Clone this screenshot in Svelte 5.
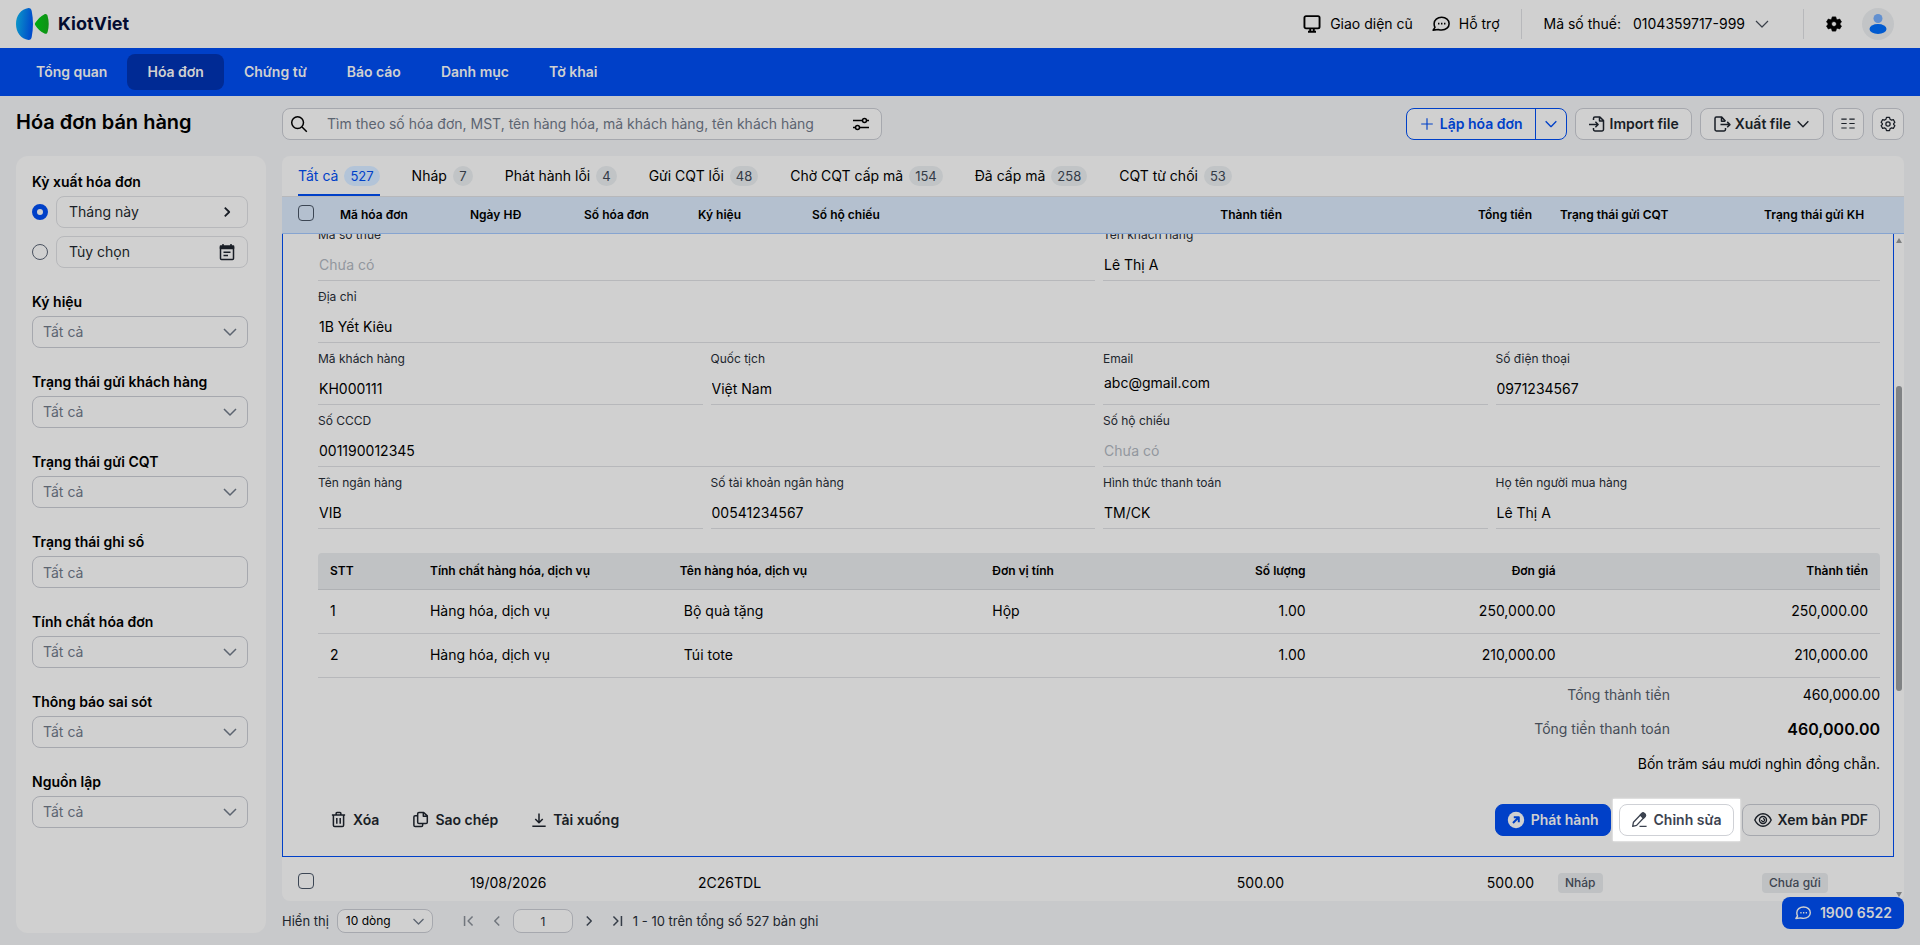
<script lang="ts">
    const icons: Record<string, string> = {
        monitor: '<rect x="2.2" y="1.9" width="13.6" height="11" rx="1.4"/><path d="M7.4 13.2v2.6M10.6 13.2v2.6M5.4 16h7.2" />',
        chat: '<path d="M9.6 3c3.900 0 6.700 2.500 6.700 5.700s-2.800 5.700-6.700 5.700c-1.100 0-2.100-.2-3-.5l-4.700.6 1.700-2.500c-.5-.9-.8-2-.8-3.300C2.800 5.500 5.700 3 9.600 3z"/><path d="M6.300 8.700h1.300M9 8.700h1.300M11.700 8.700H13" stroke-width="1.600"/>',
        search: '<circle cx="7.6" cy="7.6" r="5.9"/><path d="M12 12l4.8 4.8"/>',
        sliders: '<path d="M1 5.4h9.4M14.6 5.4H17M1 12.4h2.4M7.6 12.4H17"/><circle cx="12.5" cy="5.4" r="2"/><circle cx="5.5" cy="12.4" r="2"/>',
        plus: '<path d="M9 2.500v13M2.500 9h13"/>',
        down: '<path d="M3 6l6 6 6-6"/>',
        right: '<path d="M6.5 4l5 5-5 5"/>',
        left: '<path d="M11.5 4l-5 5 5 5"/>',
        first: '<path d="M4 3.5v11M13 4L8 9l5 5"/>',
        last: '<path d="M14 3.5v11M5 4l5 5-5 5"/>',
        importFile: '<path d="M5.5 5V3.4c0-.8.6-1.4 1.4-1.4h5l3.6 3.6v9c0 .8-.6 1.4-1.4 1.4H6.9c-.8 0-1.4-.6-1.4-1.4V13M11.5 2.2v3.9h3.8M1 9.500h9M7.4 6.800L10.1 9.500l-2.7 2.7"/>',
        exportFile: '<path d="M12.5 6.2L8.7 2H3.4C2.6 2 2 2.6 2 3.4v11.2c0 .8.6 1.4 1.4 1.4h7.7c.8 0 1.4-.6 1.4-1.4V13M8.5 2.2v4h3.8M7.5 9.6h9.3M14.2 6.9l2.7 2.7-2.7 2.7"/>',
        list: '<path d="M1.500 3.500h6M1.500 8.500h6M1.500 13.500h6M10.500 3.500h6M10.500 8.500h6M10.500 13.500h6"/>',
        gear: '<path d="M7.3 1.6h3.4l.6 2 1.7 1 2-.5 1.7 2.9-1.4 1.5v1l1.4 1.5-1.7 2.9-2-.5-1.7 1-.6 2H7.3l-.6-2-1.7-1-2 .5L1.3 11l1.4-1.5v-1L1.3 7 3 4.1l2 .5 1.7-1z"/><circle cx="9" cy="9" r="2.4"/>',
        gearSolid: '<path fill="currentColor" fill-rule="evenodd" stroke-width=".8" d="M7 1h4l.5 2.3 1.6.9 2.3-.8 2 3.4L15.700 8.400v1.300l1.700 1.500-2 3.400-2.300-.8-1.600.9L11 17H7l-.5-2.300-1.600-.9-2.300.8-2-3.400L2.300 9.700V8.400L.6 6.800l2-3.400 2.300.8 1.600-.9zM9 6.200a2.800 2.800 0 100 5.600 2.800 2.800 0 000-5.600z"/>',
        calendar: '<path d="M2.500 4h13v11.500c0 .6-.4 1-1 1h-11c-.6 0-1-.4-1-1z"/><path fill="currentColor" d="M2.500 3h13v2.600h-13z"/><path d="M5 1v2M13 1v2M5.500 9.300h7M5.500 12.500h4.500"/>',
        trash: '<path d="M2 4.200h14M6.500 4V2.500c0-.5.4-.9.9-.9h3.200c.5 0 .9.400.9.900V4M3.600 4.500v10.600c0 .8.6 1.400 1.400 1.400h8c.8 0 1.400-.6 1.400-1.400V4.500M7.200 7.500v6M10.800 7.500v6"/>',
        copy: '<path d="M7.400 1.500h5l3.800 3.700v6.600c0 .8-.6 1.400-1.400 1.400H7.400c-.8 0-1.400-.6-1.400-1.400V2.900c0-.8.600-1.400 1.400-1.400zM12 1.800v3.800h4M6 5H3.400C2.600 5 2 5.600 2 6.400v8.700c0 .8.600 1.400 1.400 1.400h6.500c.8 0 1.400-.6 1.400-1.400v-1.700"/>',
        download: '<path d="M9 1.800v10M4.800 7.800L9 12l4.200-4.200M1.500 16h15"/>',
        edit: '<path d="M1.800 16.200l.8-4.300 8.800-9.200c.7-.8 1.900-.8 2.700-.1l.6.600c.8.700.8 1.900.1 2.700l-8.900 9.300zM9 16.300h7.500"/><path fill="currentColor" d="M9.800 4.400l1.800-1.900c.7-.7 1.700-.7 2.400 0l.9.900c.7.700.6 1.700 0 2.400L13.100 7.700z"/>',
        eye: '<path d="M9 2.800c3.600 0 6.500 2.600 8.200 6.200-1.700 3.600-4.600 6.200-8.200 6.200S2.500 12.600.8 9C2.500 5.400 5.400 2.800 9 2.800z"/><circle cx="9" cy="9" r="3.500"/><path d="M9 7.600A1.500 1.500 0 117.600 9" stroke-width="1.200"/>',
        send: '<circle cx="9" cy="9" r="8.200" fill="currentColor" stroke="none"/><path d="M6 12l5.200-5.200M6.800 6.200h5v5" stroke="#0040c8" stroke-width="2"/>'
    };

    const menu = ['Tổng quan', 'Hóa đơn', 'Chứng từ', 'Báo cáo', 'Danh mục', 'Tờ khai'];

    const filters = [
        { id: 'symbol', label: 'Ký hiệu', select: true },
        { id: 'customer-state', label: 'Trạng thái gửi khách hàng', select: true },
        { id: 'tax-state', label: 'Trạng thái gửi CQT', select: true },
        { id: 'ledger-state', label: 'Trạng thái ghi sổ', select: false },
        { id: 'kind', label: 'Tính chất hóa đơn', select: true },
        { id: 'errors', label: 'Thông báo sai sót', select: true },
        { id: 'source', label: 'Nguồn lập', select: true }
    ];

    const tabs = [
        { label: 'Tất cả', count: 527 },
        { label: 'Nháp', count: 7 },
        { label: 'Phát hành lỗi', count: 4 },
        { label: 'Gửi CQT lỗi', count: 48 },
        { label: 'Chờ CQT cấp mã', count: 154 },
        { label: 'Đã cấp mã', count: 258 },
        { label: 'CQT từ chối', count: 53 }
    ];

    const fields = [
        { id: 'tax-code', label: 'Mã số thuế', value: '', span: 2 },
        { id: 'name', label: 'Tên khách hàng', value: 'Lê Thị A', span: 2 },
        { id: 'address', label: 'Địa chỉ', value: '1B Yết Kiêu', span: 4 },
        { id: 'code', label: 'Mã khách hàng', value: 'KH000111', span: 1 },
        { id: 'country', label: 'Quốc tịch', value: 'Việt Nam', span: 1 },
        { id: 'email', label: 'Email', value: 'abc@gmail.com', span: 1 },
        { id: 'phone', label: 'Số điện thoại', value: '0971234567', span: 1 },
        { id: 'cccd', label: 'Số CCCD', value: '001190012345', span: 2 },
        { id: 'passport', label: 'Số hộ chiếu', value: '', span: 2 },
        { id: 'bank', label: 'Tên ngân hàng', value: 'VIB', span: 1 },
        { id: 'account', label: 'Số tài khoản ngân hàng', value: '00541234567', span: 1 },
        { id: 'payment', label: 'Hình thức thanh toán', value: 'TM/CK', span: 1 },
        { id: 'buyer', label: 'Họ tên người mua hàng', value: 'Lê Thị A', span: 1 }
    ];

    const items = [
        { name: 'Bộ quà tặng', unit: 'Hộp', qty: '1.00', price: '250,000.00', total: '250,000.00' },
        { name: 'Túi tote', unit: '', qty: '1.00', price: '210,000.00', total: '210,000.00' }
    ];

    let activeMenu = $state('Hóa đơn');
    let activeTab = $state('Tất cả');
    let period = $state('month');
    let page = $state('1');
</script>

{#snippet icon(name: string, size = 18, width = 1.5)}
    <svg class="icon" width={size} height={size} viewBox="0 0 18 18" fill="none" stroke="currentColor" stroke-width={width} stroke-linejoin="round" aria-hidden="true">
        {@html icons[name]}
    </svg>
{/snippet}

{#snippet invoiceCols()}
    <colgroup>
        <col class="c-check" />
        <col class="c-code" />
        <col class="c-short" />
        <col class="c-short" />
        <col class="c-short" />
        <col />
        <col class="c-money" />
        <col class="c-money" />
        <col class="c-tax" />
        <col class="c-customer" />
    </colgroup>
{/snippet}

<div class="app">
    <header class="topbar">
        <a class="logo" href="/">
            <svg width="33" height="32" viewBox="0 0 33 32" aria-hidden="true">
                <defs>
                    <linearGradient id="logo-blue" x1="0" x2="1" y1="0.300" y2="0.500">
                        <stop offset="0" stop-color="#0a96c8" />
                        <stop offset="1" stop-color="#0048cc" />
                    </linearGradient>
                    <linearGradient id="logo-green" x1="0" x2="1">
                        <stop offset="0" stop-color="#00ac10" />
                        <stop offset="1" stop-color="#109016" />
                    </linearGradient>
                </defs>
                <path fill="url(#logo-blue)" d="M12.500 0C5 1 0 7.500 0 16s5 15 12.500 16c2 0 2.800-1 3.200-3 1.700-8.500 1.700-17.500 0-26-.4-2-1.200-3-3.200-3z" />
                <path fill="url(#logo-green)" d="M28.500 6.200c1.500-.5 2.700.2 3.100 1.800 1.500 5.300 1.500 10.700 0 16-.4 1.600-1.600 2.300-3.100 1.600-4-2.200-7-5-9.200-8.400-.6-.9-.6-1.500 0-2.400 2.200-3.400 5.200-6.400 9.200-8.600z" />
            </svg>
            <span>KiotViet</span>
        </a>
        <div class="top-links">
            <button class="top-link">{@render icon('monitor', 20, 1.7)}Giao diện cũ</button>
            <button class="top-link">{@render icon('chat', 20, 1.4)}Hỗ trợ</button>
        </div>
        <button class="tax-code"><span>Mã số thuế:</span><span>0104359717-999</span>{@render icon('down', 18, 1.2)}</button>
        <button class="plain gear" aria-label="Thiết lập">{@render icon('gearSolid', 16, 1)}</button>
        <button class="avatar" aria-label="Tài khoản">
            <svg width="32" height="32" viewBox="0 0 32 32" aria-hidden="true">
                <circle cx="16" cy="10.500" r="4.500" fill="#6290d0" />
                <ellipse cx="16" cy="21" rx="8.500" ry="5" fill="#005ad0" />
            </svg>
        </button>
    </header>

    <nav class="menu">
        {#each menu as item}
            <a href="#{item}" class:active={item === activeMenu} onclick={() => (activeMenu = item)}>{item}</a>
        {/each}
    </nav>

    <div class="content">
        <aside class="side">
            <h1>Hóa đơn bán hàng</h1>
            <div class="filters">
                <div class="filter">
                    <span class="filter-title">Kỳ xuất hóa đơn</span>
                    <div class="period">
                        <input type="radio" name="period" value="month" aria-label="Tháng này" bind:group={period} />
                        <button class="box">Tháng này{@render icon('right', 16, 2)}</button>
                    </div>
                    <div class="period">
                        <input type="radio" name="period" value="custom" aria-label="Tùy chọn" bind:group={period} />
                        <button class="box calendar">Tùy chọn{@render icon('calendar', 18, 1.5)}</button>
                    </div>
                </div>
                {#each filters as filter}
                    <div class="filter">
                        <label class="filter-title" for={filter.id}>{filter.label}</label>
                        {#if filter.select}
                            <div class="select">
                                <select id={filter.id}><option>Tất cả</option></select>
                                {@render icon('down', 18, 1.5)}
                            </div>
                        {:else}
                            <input class="text-box" id={filter.id} type="text" placeholder="Tất cả" />
                        {/if}
                    </div>
                {/each}
            </div>
        </aside>

        <main class="main">
            <div class="toolbar">
                <div class="search">
                    {@render icon('search', 18, 1.5)}
                    <input type="text" aria-label="Tìm hóa đơn" placeholder="Tìm theo số hóa đơn, MST, tên hàng hóa, mã khách hàng, tên khách hàng" />
                    <button class="plain" aria-label="Bộ lọc">{@render icon('sliders', 18, 1.5)}</button>
                </div>
                <div class="split">
                    <button>{@render icon('plus', 16, 1.300)}Lập hóa đơn</button>
                    <button class="more" aria-label="Thêm">{@render icon('down', 16, 1.5)}</button>
                </div>
                <button class="btn">{@render icon('importFile', 18, 1.500)}Import file</button>
                <button class="btn">{@render icon('exportFile', 18, 1.500)}Xuất file{@render icon('down', 16, 1.600)}</button>
                <button class="btn square" aria-label="Cột hiển thị">{@render icon('list', 16, 1.200)}</button>
                <button class="btn square" aria-label="Tùy chỉnh">{@render icon('gear', 16, 1.400)}</button>
            </div>

            <section class="panel">
                <div class="tabs">
                    {#each tabs as tab}
                        <button class:active={tab.label === activeTab} onclick={() => (activeTab = tab.label)}>
                            {tab.label}<span class="count">{tab.count}</span>
                        </button>
                    {/each}
                </div>

                <div class="table-head">
                    <table class="invoices">
                        {@render invoiceCols()}
                        <thead>
                            <tr>
                                <th><input type="checkbox" aria-label="Chọn tất cả" /></th>
                                <th>Mã hóa đơn</th>
                                <th>Ngày HĐ</th>
                                <th>Số hóa đơn</th>
                                <th>Ký hiệu</th>
                                <th>Số hộ chiếu</th>
                                <th class="money">Thành tiền</th>
                                <th class="money">Tổng tiền</th>
                                <th class="status">Trạng thái gửi CQT</th>
                                <th class="status">Trạng thái gửi KH</th>
                            </tr>
                        </thead>
                    </table>
                </div>

                <div class="table-body">
                    <div class="rows">
                        <div class="detail">
                            <div class="fields">
                                {#each fields as field}
                                    <div class="field span-{field.span}">
                                        <label for={field.id}>{field.label}</label>
                                        <input id={field.id} class:compact={field.id === 'email'} type="text" value={field.value} placeholder="Chưa có" readonly />
                                    </div>
                                {/each}
                            </div>

                            <table class="items">
                                <colgroup>
                                    <col class="i-index" />
                                    <col class="i-kind" />
                                    <col class="i-name" />
                                    <col class="i-unit" />
                                    <col class="i-qty" />
                                    <col class="i-price" />
                                    <col />
                                </colgroup>
                                <thead>
                                    <tr>
                                        <th>STT</th>
                                        <th>Tính chất hàng hóa, dịch vụ</th>
                                        <th>Tên hàng hóa, dịch vụ</th>
                                        <th>Đơn vị tính</th>
                                        <th class="num">Số lượng</th>
                                        <th class="num">Đơn giá</th>
                                        <th class="num">Thành tiền</th>
                                    </tr>
                                </thead>
                                <tbody>
                                    {#each items as item, i}
                                        <tr>
                                            <td>{i + 1}</td>
                                            <td>Hàng hóa, dịch vụ</td>
                                            <td class="name">{item.name}</td>
                                            <td>{item.unit}</td>
                                            <td class="num">{item.qty}</td>
                                            <td class="num">{item.price}</td>
                                            <td class="num">{item.total}</td>
                                        </tr>
                                    {/each}
                                </tbody>
                            </table>

                            <dl class="totals">
                                <dt>Tổng thành tiền</dt>
                                <dd>460,000.00</dd>
                                <dt>Tổng tiền thanh toán</dt>
                                <dd class="grand">460,000.00</dd>
                            </dl>
                            <p class="in-words">Bốn trăm sáu mươi nghìn đồng chẵn.</p>

                            <div class="actions">
                                <button class="text-btn">{@render icon('trash', 17, 1.600)}Xóa</button>
                                <button class="text-btn">{@render icon('copy', 17, 1.600)}Sao chép</button>
                                <button class="text-btn">{@render icon('download', 16, 1.700)}Tải xuống</button>
                                <div class="actions-right">
                                    <button class="btn primary">{@render icon('send', 18)}Phát hành</button>
                                    <span class="spotlight">
                                        <button class="btn edit">{@render icon('edit', 17, 1.400)}Chỉnh sửa</button>
                                    </span>
                                    <button class="btn view">{@render icon('eye', 18, 1.400)}Xem bản PDF</button>
                                </div>
                            </div>
                        </div>

                        <table class="invoices">
                            {@render invoiceCols()}
                            <tbody>
                                <tr>
                                    <td><input type="checkbox" aria-label="Chọn hóa đơn" /></td>
                                    <td></td>
                                    <td>19/08/2026</td>
                                    <td></td>
                                    <td>2C26TDL</td>
                                    <td></td>
                                    <td class="money">500.00</td>
                                    <td class="money">500.00</td>
                                    <td><span class="tag">Nháp</span></td>
                                    <td><span class="tag">Chưa gửi</span></td>
                                </tr>
                            </tbody>
                        </table>
                    </div>
                    <div class="scrollbar">
                        <span class="arrow up"></span>
                        <span class="track"><span class="thumb"></span></span>
                        <span class="arrow"></span>
                    </div>
                </div>
            </section>

            <footer class="pager">
                <label for="page-size">Hiển thị</label>
                <div class="select small">
                    <select id="page-size"><option>10 dòng</option></select>
                    {@render icon('down', 15, 1.500)}
                </div>
                <div class="pages">
                    <button class="plain" disabled aria-label="Trang đầu">{@render icon('first', 16, 1.700)}</button>
                    <button class="plain" disabled aria-label="Trang trước">{@render icon('left', 16, 1.700)}</button>
                    <input type="text" aria-label="Trang" bind:value={page} />
                    <button class="plain" aria-label="Trang sau">{@render icon('right', 16, 1.700)}</button>
                    <button class="plain" aria-label="Trang cuối">{@render icon('last', 16, 1.700)}</button>
                </div>
                <span>1 - 10 trên tổng số 527 bản ghi</span>
            </footer>
        </main>
    </div>

    <a class="hotline" href="tel:19006522">{@render icon('chat', 18, 1.400)}1900 6522</a>
</div>

<style>
:global(body) {
    background: #c8c9cb;
}
.app {
    --blue: #0040c8;
    --panel: #d0d0d0;
    --line: #b7b8bb;
    --edge: #a6a8ae;
    --ink: #191e26;
    height: 100vh;
    display: flex;
    flex-direction: column;
    font-family: Inter, "Liberation Sans", sans-serif;
    font-size: 14px;
    line-height: 20px;
    color: #000;
}
.app :global(*) {
    box-sizing: border-box;
}
button, input, select {
    margin: 0;
    padding: 0;
    border: 0;
    background: none;
    font: inherit;
    color: inherit;
}
a {
    color: inherit;
    text-decoration: none;
}
.icon {
    flex: none;
    display: block;
}
.plain {
    display: flex;
}

/* top bar */
.topbar {
    flex: none;
    height: 48px;
    padding: 0 26px 0 16px;
    background: var(--panel);
    display: flex;
    align-items: center;
}
.logo {
    display: flex;
    align-items: center;
    gap: 9px;
    margin-right: auto;
    color: #040c30;
    font-size: 18px;
    font-weight: 700;
}
.top-links {
    display: flex;
    gap: 18px;
    padding-right: 21px;
    border-right: 1px solid var(--line);
}
.top-link {
    height: 30px;
    display: flex;
    align-items: center;
    gap: 8px;
}
.tax-code {
    height: 30px;
    padding: 0 32px 0 22px;
    border-right: 1px solid var(--line);
    display: flex;
    align-items: center;
    gap: 12px;
}
.tax-code .icon {
    margin-left: -4px;
    color: #3a4049;
}
.gear {
    margin: 0 20px 0 22px;
}
.avatar {
    width: 32px;
    height: 32px;
    border-radius: 50%;
    background: #c2c4c6;
}

/* menu */
.menu {
    flex: none;
    height: 48px;
    padding: 0 16px;
    background: var(--blue);
    display: flex;
    align-items: center;
}
.menu a {
    padding: 8px 20px;
    border-radius: 8px;
    color: #d0d0d0;
    font-weight: 600;
}
.menu a.active {
    background: #002a94;
}

.content {
    flex: 1;
    min-height: 0;
    padding: 12px 16px;
    display: flex;
    gap: 16px;
}

/* filters */
.side {
    flex: none;
    width: 250px;
    display: flex;
    flex-direction: column;
}
h1 {
    margin: 0 0 20px;
    font-size: 20px;
    line-height: 28px;
    font-weight: 600;
}
.filters {
    flex: 1;
    padding: 16px 18px 16px 16px;
    border-radius: 12px;
    background: var(--panel);
    display: flex;
    flex-direction: column;
    gap: 24px;
}
.filter {
    display: flex;
    flex-direction: column;
    gap: 4px;
}
.filter-title {
    font-weight: 600;
}
.period {
    display: flex;
    align-items: center;
    gap: 8px;
}
.period + .period {
    margin-top: 4px;
}
.period input {
    appearance: none;
    flex: none;
    width: 16px;
    height: 16px;
    border: 1px solid #4a5260;
    border-radius: 50%;
}
.period input:checked {
    border: 5px solid var(--blue);
}
.box {
    flex: 1;
    height: 32px;
    padding: 0 12px;
    border: 1px solid var(--line);
    border-radius: 8px;
    display: flex;
    align-items: center;
    justify-content: space-between;
    color: var(--ink);
}
.calendar {
    padding-right: 11px;
}
.select {
    display: grid;
    align-items: center;
    color: #5c6470;
}
.select select {
    grid-area: 1 / 1;
    appearance: none;
    width: 100%;
    height: 32px;
    padding: 0 10px;
    border: 1px solid var(--edge);
    border-radius: 8px;
}
.select .icon {
    grid-area: 1 / 1;
    justify-self: end;
    margin-right: 9px;
    pointer-events: none;
}
.text-box {
    height: 32px;
    padding: 0 10px;
    border: 1px solid var(--edge);
    border-radius: 8px;
}
::placeholder {
    color: #5c6470;
    opacity: 1;
}

/* toolbar */
.main {
    flex: 1;
    min-width: 0;
    display: flex;
    flex-direction: column;
}
.toolbar {
    display: flex;
    gap: 8px;
    margin-bottom: 16px;
}
.search {
    flex: 0 1 600px;
    height: 32px;
    margin-right: auto;
    padding: 0 11px 0 7px;
    border: 1px solid var(--edge);
    border-radius: 8px;
    background: var(--panel);
    display: flex;
    align-items: center;
    gap: 19px;
}
.search input {
    flex: 1;
    outline: 0;
}
.split {
    display: flex;
    border: 1px solid var(--blue);
    border-radius: 8px;
    background: var(--panel);
    color: var(--blue);
    font-weight: 600;
}
.split button {
    padding: 0 12px;
    display: flex;
    align-items: center;
    gap: 5px;
}
.split .more {
    padding: 0 7px;
    border-left: 1px solid var(--blue);
}
.btn {
    height: 32px;
    padding: 0 12px;
    border: 1px solid var(--edge);
    border-radius: 8px;
    background: var(--panel);
    display: flex;
    align-items: center;
    justify-content: center;
    gap: 4px;
    color: var(--ink);
    font-weight: 600;
    white-space: nowrap;
}
.btn.square {
    width: 32px;
    padding: 0;
}

/* invoice panel */
.panel {
    flex: 1;
    min-height: 0;
    border-radius: 8px;
    background: var(--panel);
    overflow: hidden;
    display: flex;
    flex-direction: column;
}
.tabs {
    flex: none;
    height: 41px;
    padding: 0 16px;
    border-bottom: 1px solid var(--line);
    display: flex;
    gap: 32px;
}
.tabs button {
    padding-top: 2px;
    border-bottom: 2px solid transparent;
    display: flex;
    align-items: center;
    gap: 6px;
}
.count {
    min-width: 20px;
    padding: 0 6px;
    border-radius: 10px;
    background: #c1c4c6;
    color: #343b46;
    font-size: 13px;
    text-align: center;
}
.tabs .active {
    border-color: var(--blue);
    color: var(--blue);
}
.active .count {
    background: #b3c4d8;
    color: var(--blue);
}
.invoices, .items {
    width: 100%;
    table-layout: fixed;
    border-collapse: collapse;
}
th {
    font-size: 12px;
    font-weight: 600;
    text-align: left;
    white-space: nowrap;
}
.table-head {
    flex: none;
    padding-right: 10px;
    border-bottom: 1px solid #86a4d0;
    background: #b4c0cf;
}
.invoices th {
    height: 36px;
    padding: 0 10px;
}
.invoices td {
    height: 52px;
    padding: 0 10px;
}
.invoices th:first-child, .invoices td:first-child {
    padding: 0 16px;
}
.invoices th.money {
    padding-right: 16px;
    text-align: right;
}
.invoices td.money {
    padding-right: 14px;
    text-align: right;
}
.invoices th.status {
    padding-left: 12px;
}
.c-check { width: 48px; }
.c-code { width: 130px; }
.c-short { width: 114px; }
.c-money { width: 250px; }
.c-tax { width: 204px; }
.c-customer { width: 142px; }
.invoices input {
    appearance: none;
    display: block;
    width: 16px;
    height: 16px;
    margin-bottom: 4px;
    border: 1px solid #3c4654;
    border-radius: 4px;
}
.tag {
    display: block;
    width: fit-content;
    padding: 0 7px;
    border-radius: 4px;
    background: #bfc1c3;
    color: #3d4450;
    font-size: 12px;
    font-weight: 500;
}
.table-body {
    flex: 1;
    min-height: 0;
    display: flex;
}
.rows {
    flex: 1;
    min-width: 0;
    overflow: hidden;
}
.scrollbar {
    flex: none;
    width: 10px;
    padding: 4px 0;
    display: flex;
    flex-direction: column;
    align-items: center;
}
.arrow {
    border: 3px solid transparent;
    border-top: 5px solid #7c7e80;
    border-bottom: 0;
}
.arrow.up {
    border-top: 0;
    border-bottom: 5px solid #7c7e80;
}
.track {
    flex: 1;
    width: 6px;
    display: flex;
    flex-direction: column;
}
.track::before {
    content: '';
    flex: 22;
}
.track::after {
    content: '';
    flex: 31;
}
.thumb {
    flex: 47;
    border-radius: 3px;
    background: #808284;
}

/* opened invoice, scrolled a little past its first labels */
.detail {
    margin-top: -15px;
    padding: 0 13px 20px 35px;
    border: 1px solid var(--blue);
    border-top: 0;
}
.fields {
    display: grid;
    grid-template-columns: repeat(4, 1fr);
    column-gap: 8px;
    margin-bottom: 24px;
}
.field {
    height: 62px;
    padding-top: 8px;
    border-bottom: 1px solid var(--line);
    display: flex;
    flex-direction: column;
}
.span-2 { grid-column: span 2; }
.span-4 { grid-column: span 4; }
.field label {
    margin-bottom: 6px;
    color: #20252d;
    font-size: 12px;
    line-height: 16px;
}
.field input {
    height: 31px;
    padding: 0 1px;
}
.field .compact {
    height: 20px;
}
.field ::placeholder {
    color: #92979e;
}
.items th {
    height: 36px;
    padding: 0 12px;
    border-bottom: 1px solid #afb1b4;
    background: #c0c2c4;
}
.items th:first-child {
    border-top-left-radius: 4px;
}
.items th:last-child {
    border-top-right-radius: 4px;
}
.items td {
    height: 44px;
    padding: 0 12px;
    border-bottom: 1px solid var(--line);
}
.items .name {
    padding-left: 16px;
}
.items .num {
    text-align: right;
}
.i-index { width: 6.4%; }
.i-kind { width: 16%; }
.i-name { width: 20%; }
.i-unit { width: 12%; }
.i-qty { width: 9.6%; }
.i-price { width: 16%; }
.totals {
    margin: 0;
    display: grid;
    grid-template-columns: 1fr 210px;
    line-height: 34px;
    text-align: right;
}
.totals dt {
    color: #454c57;
}
.totals dd {
    margin: 0;
}
.totals .grand {
    font-size: 16px;
    font-weight: 600;
}
.in-words {
    margin: 0 0 22px;
    line-height: 36px;
    text-align: right;
}
.actions {
    display: flex;
    align-items: center;
    gap: 33px;
    padding-left: 12px;
}
.text-btn {
    display: flex;
    align-items: center;
    gap: 6px;
    color: var(--ink);
    font-weight: 600;
}
.actions-right {
    margin-left: auto;
    display: flex;
    gap: 8px;
}
.actions-right .btn {
    padding: 0 11px;
    gap: 6px;
}
.actions-right .primary {
    border-color: var(--blue);
    background: var(--blue);
    color: #d0d0d0;
}
.spotlight {
    margin: -5px -6px;
    padding: 5px 6px;
    background: #fff;
    box-shadow: 0 0 2px #fff;
}
.spotlight .edit {
    border-color: #cfd1d6;
    background: #fff;
    color: #3c4350;
}

/* pager */
.pager {
    margin-top: 8px;
    height: 24px;
    display: flex;
    align-items: center;
    color: #20252d;
    font-size: 13px;
}
.small {
    width: 96px;
    margin: 0 28px 0 8px;
}
.small select {
    height: 24px;
    padding: 0 8px;
    background: var(--panel);
    color: #000;
    font-size: 12px;
}
.small .icon {
    margin-right: 7px;
}
.pages {
    display: flex;
    align-items: center;
    gap: 8px;
    margin-right: 8px;
}
.pages .plain + .plain {
    margin-left: 4px;
}
.pages input {
    width: 60px;
    height: 24px;
    border: 1px solid var(--edge);
    border-radius: 8px;
    background: var(--panel);
    text-align: center;
    font-size: 12px;
}
.pages .plain {
    color: #363d48;
}
.pages .plain:disabled {
    color: #71767d;
}

.hotline {
    position: fixed;
    right: 16px;
    bottom: 16px;
    height: 32px;
    padding: 0 12px;
    border-radius: 8px;
    background: var(--blue);
    color: #d0d0d0;
    font-weight: 600;
    display: flex;
    align-items: center;
    gap: 8px;
}
</style>
